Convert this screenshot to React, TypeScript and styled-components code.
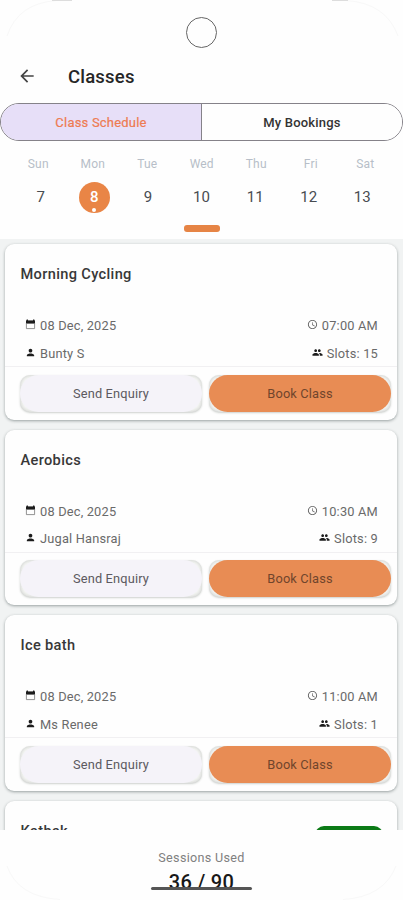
import React from 'react';
import styled, { createGlobalStyle } from 'styled-components';
import { MdAccessTime, MdArrowBack, MdPeople, MdPerson } from 'react-icons/md';

const GlobalStyle = createGlobalStyle`
  * { box-sizing: border-box; }
  body { margin: 0; background: #fff; }
  button { font: inherit; border: 0; padding: 0; }
`;

const Screen = styled.div`
  position: relative;
  width: 403px;
  height: 900px;
  overflow: hidden;
  display: flex;
  flex-direction: column;
  background: #fefefe;
  font-family: Roboto, 'Liberation Sans', sans-serif;
  color: #222;
`;

const DeviceOutline = styled.svg`
  position: absolute;
  inset: 0;
  pointer-events: none;
`;

const CameraArea = styled.div`
  height: 54px;
  padding-top: 17px;
  display: flex;
  justify-content: center;
  flex: none;
`;

const Camera = styled.div`
  width: 31px;
  height: 31px;
  border: 1px solid #666;
  border-radius: 50%;
`;

const AppBar = styled.header`
  height: 49px;
  flex: none;
  display: flex;
  align-items: center;
  padding: 0 0 4px 17px;
  gap: 31px;
  svg { width: 20px; height: 20px; color: #444; position: relative; top: -0.5px; }
`;

const Title = styled.h1`
  margin: 0;
  font-size: 18.5px;
  line-height: 22px;
  font-weight: 500;
  letter-spacing: 0.2px;
  color: #262626;
`;

const Tabs = styled.div`
  display: flex;
  flex: none;
  height: 38px;
  border: 1px solid #858289;
  border-radius: 19px;
  overflow: hidden;
`;

const Tab = styled.button<{ $active?: boolean }>`
  flex: 1;
  font-size: 13px;
  font-weight: ${p => (p.$active ? 400 : 500)};
  letter-spacing: 0.2px;
  color: ${p => (p.$active ? '#ee7b52' : '#333')};
  background: ${p => (p.$active ? '#e7dff8' : '#fefefe')};
  -webkit-text-stroke: ${p => (p.$active ? '0.2px #ee7b52' : '0')};
  & + & { border-left: 1px solid #858289; }
`;

const Calendar = styled.section`
  height: 98px;
  flex: none;
  display: flex;
  flex-direction: column;
`;

const Weekdays = styled.div`
  display: grid;
  grid-template-columns: repeat(7, 54.5px);
  padding: 14px 0 0 11px;
  text-align: center;
  font-size: 12px;
  line-height: 18px;
  letter-spacing: 0.2px;
  color: #b7bec8;
`;

const Dates = styled.div`
  display: grid;
  grid-template-columns: repeat(7, 53.6px);
  padding: 9px 0 0 14px;
  justify-items: center;
`;

const DateCell = styled.div<{ $selected?: boolean }>`
  display: flex;
  flex-direction: column;
  align-items: center;
  width: 31px;
  height: 31px;
  border-radius: 50%;
  font-size: 15px;
  line-height: 31px;
  letter-spacing: 0.1px;
  font-weight: ${p => (p.$selected ? 500 : 400)};
  color: ${p => (p.$selected ? '#fff' : '#484c51')};
  background: ${p => (p.$selected ? '#e98546' : 'transparent')};
`;

const EventDot = styled.i`
  width: 4px;
  height: 4px;
  margin-top: -5px;
  border-radius: 50%;
  background: #fff;
`;

const Handle = styled.div`
  width: 36px;
  height: 7px;
  margin: 12px auto 0;
  border-radius: 3px;
  background: #e68445;
`;

const ClassList = styled.main`
  height: 590.5px;
  flex: none;
  overflow: hidden;
  background: #f1f3f3;
  padding: 5px 6px 0 5px;
  display: flex;
  flex-direction: column;
  gap: 10px;
`;

const Card = styled.article`
  height: 175.6px;
  flex: none;
  border-radius: 9px;
  background: #fefefe;
  box-shadow: 0 1px 3px rgba(45, 60, 60, 0.45);
`;

const CardHead = styled.div`
  height: 68px;
  padding: 19px 14px 0 15.5px;
  display: flex;
  justify-content: space-between;
`;

const ClassName = styled.h2`
  margin: 0;
  font-size: 14.6px;
  line-height: 22px;
  font-weight: 500;
  letter-spacing: 0.34px;
  color: #383838;
`;

const Badge = styled.span`
  width: 68px;
  height: 23px;
  margin-top: 6px;
  border-radius: 9px;
  background: #0b7a16;
`;

const Details = styled.div`
  height: 55px;
  padding: 0 19px 0 20px;
  border-bottom: 1px solid #f1f0f2;
`;

const DetailRow = styled.div`
  height: 27.5px;
  display: flex;
  justify-content: space-between;
`;

const Detail = styled.span<{ $light?: boolean }>`
  display: flex;
  align-items: center;
  height: 27.5px;
  gap: 4px;
  font-size: 12.8px;
  letter-spacing: 0.2px;
  color: #6a6a6a;
  svg {
    width: 11px;
    height: 11px;
    color: ${p => (p.$light ? '#666' : '#1c1c1c')};
    position: relative;
    top: -1px;
  }
`;

const Actions = styled.div`
  display: flex;
  gap: 7px;
  padding: 7.5px 6px 0 15px;
`;

const ActionShadow = styled.div`
  width: 182px;
  height: 37px;
  border-radius: 10px;
  background: #f7f8f6;
  box-shadow: 0 1px 2px rgba(55, 65, 55, 0.24), inset 0 0 4px rgba(60, 70, 60, 0.26);
`;

const ActionButton = styled.button<{ $primary?: boolean }>`
  display: block;
  width: 100%;
  height: 100%;
  border-radius: 18.5px;
  font-size: 12.8px;
  letter-spacing: 0.15px;
  color: ${p => (p.$primary ? '#70452c' : '#5c5960')};
  background: ${p => (p.$primary ? '#e88c54' : '#f5f3f9')};
`;

const Footer = styled.footer`
  flex: 1;
  display: flex;
  flex-direction: column;
  align-items: center;
  padding-top: 19px;
`;

const FooterLabel = styled.div`
  font-size: 12.6px;
  line-height: 18px;
  letter-spacing: 0.3px;
  color: #808080;
`;

const SessionCount = styled.div`
  margin-top: 3px;
  font-size: 20px;
  line-height: 25px;
  font-weight: 500;
  letter-spacing: 0.3px;
  color: #181818;
`;

const HomeBar = styled.div`
  position: absolute;
  left: 151px;
  top: 887px;
  width: 101px;
  height: 3px;
  border-radius: 2px;
  background: #555;
`;

const CalendarIcon = () => (
  <svg viewBox="0 0 11 11">
    <path d="M2.3 .5V2M8.7 .5V2" stroke="#1c1c1c" strokeWidth="1.3" />
    <path d="M1 1.4H10V4.6H1Z" fill="#1c1c1c" />
    <path d="M1.4 4V9.6H9.6V4" fill="none" stroke="#777" strokeWidth=".8" />
  </svg>
);

const classes = [
  { name: 'Morning Cycling', time: '07:00 AM', coach: 'Bunty S', slots: 15 },
  { name: 'Aerobics', time: '10:30 AM', coach: 'Jugal Hansraj', slots: 9 },
  { name: 'Ice bath', time: '11:00 AM', coach: 'Ms Renee', slots: 1 },
  { name: 'Kathak', time: '', coach: '', slots: 0, badge: true },
];

export default function App() {
  return (
    <Screen>
      <GlobalStyle />
      <CameraArea><Camera /></CameraArea>
      <AppBar><MdArrowBack /><Title>Classes</Title></AppBar>
      <Tabs>
        <Tab $active>Class Schedule</Tab>
        <Tab>My Bookings</Tab>
      </Tabs>
      <Calendar>
        <Weekdays>
          {['Sun', 'Mon', 'Tue', 'Wed', 'Thu', 'Fri', 'Sat'].map(d => <span key={d}>{d}</span>)}
        </Weekdays>
        <Dates>
          {[7, 8, 9, 10, 11, 12, 13].map(n => (
            <DateCell key={n} $selected={n === 8}>{n}{n === 8 && <EventDot />}</DateCell>
          ))}
        </Dates>
        <Handle />
      </Calendar>
      <ClassList>
        {classes.map(c => (
          <Card key={c.name}>
            <CardHead><ClassName>{c.name}</ClassName>{c.badge && <Badge />}</CardHead>
            {!c.badge && (
              <>
                <Details>
                  <DetailRow>
                    <Detail><CalendarIcon />08 Dec, 2025</Detail>
                    <Detail $light><MdAccessTime />{c.time}</Detail>
                  </DetailRow>
                  <DetailRow>
                    <Detail><MdPerson />{c.coach}</Detail>
                    <Detail><MdPeople />Slots: {c.slots}</Detail>
                  </DetailRow>
                </Details>
                <Actions>
                  <ActionShadow><ActionButton>Send Enquiry</ActionButton></ActionShadow>
                  <ActionShadow><ActionButton $primary>Book Class</ActionButton></ActionShadow>
                </Actions>
              </>
            )}
          </Card>
        ))}
      </ClassList>
      <Footer>
        <FooterLabel>Sessions Used</FooterLabel>
        <SessionCount>36 / 90</SessionCount>
      </Footer>
      <HomeBar />
      <DeviceOutline width="403" height="900" fill="none" stroke="#f8f8f8">
        <path d="M7 36Q18 3 57 .5M346 .5Q386 3 398 36M7 866Q18 897 60 899.5M343 899.5Q384 897 396 866" />
        <path d="M52 .5H72M332 .5H348" stroke="#ddd" />
      </DeviceOutline>
    </Screen>
  );
}
